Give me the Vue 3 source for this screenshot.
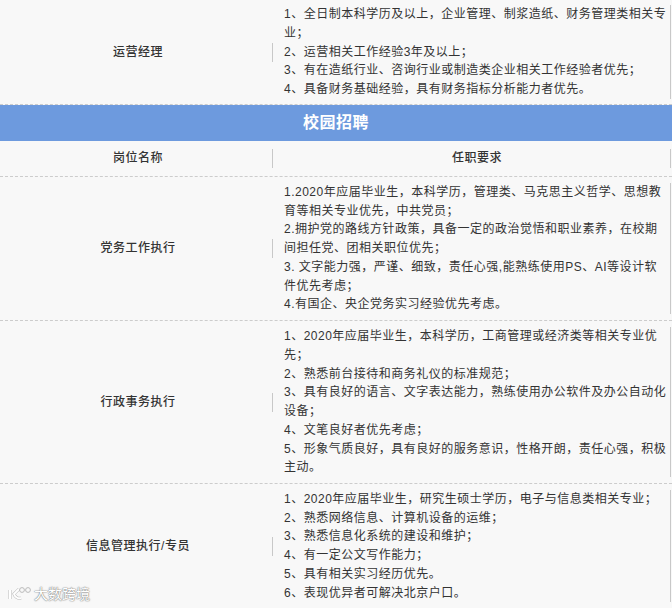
<script setup>
const rows = [
  { title: '运营经理', cls: 'r0', lines: ['1、全日制本科学历及以上，企业管理、制浆造纸、财务管理类相关专业；', '2、运营相关工作经验3年及以上；', '3、有在造纸行业、咨询行业或制造类企业相关工作经验者优先；', '4、具备财务基础经验，具有财务指标分析能力者优先。'] }
]
const campus = [
  { title: '党务工作执行', cls: 'r1', lines: ['1.2020年应届毕业生，本科学历，管理类、马克思主义哲学、思想教育等相关专业优先，中共党员；', '2.拥护党的路线方针政策，具备一定的政治觉悟和职业素养，在校期间担任党、团相关职位优先；', '3. 文字能力强，严谨、细致，责任心强,能熟练使用PS、AI等设计软件优先考虑；', '4.有国企、央企党务实习经验优先考虑。'] },
  { title: '行政事务执行', cls: 'r2', lines: ['1、2020年应届毕业生，本科学历，工商管理或经济类等相关专业优先；', '2、熟悉前台接待和商务礼仪的标准规范；', '3、具有良好的语言、文字表达能力，熟练使用办公软件及办公自动化设备；', '4、文笔良好者优先考虑；', '5、形象气质良好，具有良好的服务意识，性格开朗，责任心强，积极主动。'] },
  { title: '信息管理执行/专员', cls: 'r3', lines: ['1、2020年应届毕业生，研究生硕士学历，电子与信息类相关专业；', '2、熟悉网络信息、计算机设备的运维；', '3、熟悉信息化系统的建设和维护；', '4、有一定公文写作能力；', '5、具有相关实习经历优先。', '6、表现优异者可解决北京户口。'] }
]
</script>

<template>
  <div class="page">
    <div v-for="r in rows" :key="r.title" class="row" :class="r.cls">
      <div class="name">{{ r.title }}</div>
      <div class="req"><p v-for="l in r.lines" :key="l">{{ l }}</p></div>
    </div>
    <div class="banner">校园招聘</div>
    <div class="row head">
      <div class="name">岗位名称</div>
      <div class="req center">任职要求</div>
    </div>
    <div v-for="r in campus" :key="r.title" class="row" :class="r.cls">
      <div class="name">{{ r.title }}</div>
      <div class="req"><p v-for="l in r.lines" :key="l">{{ l }}</p></div>
    </div>
    <div class="mark">
      <svg width="26" height="16" viewBox="0 0 26 16" fill="none" stroke="#fff" stroke-width="2">
        <path d="M3 4v9" stroke="#bbb" stroke-width="3" />
        <path d="M12 3L7 8c1 3 4 5 7 4" stroke="#bbb" stroke-width="3" />
        <path d="M3 4v9" />
        <path d="M12 3L7 8c1 3 4 5 7 4" />
        <circle cx="15" cy="4" r="2.400" stroke="#bbb" stroke-width="1" />
        <circle cx="21" cy="4" r="2.400" stroke="#bbb" stroke-width="1" />
      </svg>
      <span>大数跨境</span>
    </div>
  </div>
</template>

<style>
html, body { margin: 0; background: #f8f8f8; }
</style>

<style scoped>
.page {
  position: relative;
  width: 672px;
  height: 608px;
  overflow: hidden;
  background: #f8f8f8;
  color: #333;
  font-family: "Liberation Sans", "Noto Sans CJK SC", sans-serif;
  font-size: 12px;
  letter-spacing: 0.5px;
}
.row {
  display: grid;
  grid-template-columns: 273px 398px;
  align-items: center;
  box-sizing: border-box;
  border-bottom: 1px dashed #ccc;
}
.name {
  position: relative;
  text-align: center;
  font-weight: 500;
  padding-left: 4px;
  line-height: 19px;
  border-right: 1px solid #c8c8c8;
}
.req {
  box-sizing: border-box;
  padding: 0 3px 0 11px;
  line-height: 18.75px;
  border-right: 1px solid #c8c8c8;
}
.req p { margin: 0; }
.req.center { text-align: center; font-weight: 500; padding: 0 0 0 11px; }
.r0 { height: 105px; }
.r1 { height: 144px; }
.r2 { height: 163px; }
.r3 { height: 124px; border-bottom: 0; }
.head { height: 36px; }
.banner {
  height: 36px;
  background: #6d9ade;
  color: #fff;
  font-size: 16px;
  font-weight: 700;
  line-height: 36px;
  text-align: center;
}
.mark {
  position: absolute;
  left: 7px;
  top: 585px;
  display: flex;
  align-items: center;
  gap: 1px;
  color: #fff;
  font-size: 14px;
  line-height: 18px;
  letter-spacing: 0;
  text-shadow: 0 0 1px #888, 0 0 1px #888, 0 0 2px #aaa;
}
</style>
